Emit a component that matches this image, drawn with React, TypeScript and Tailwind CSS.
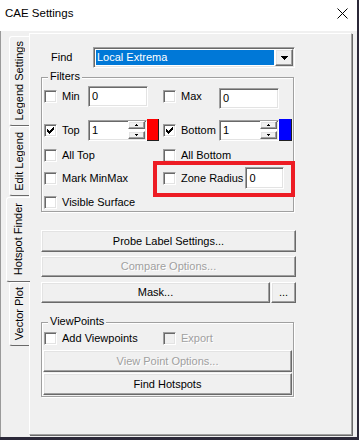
import React from 'react';

const raised =
  'border border-t-white border-l-white border-r-[#696969] border-b-[#696969] shadow-[inset_-1px_-1px_0_#a0a0a0,inset_1px_1px_0_#e3e3e3]';
const sunken =
  'border border-t-[#a0a0a0] border-l-[#a0a0a0] border-r-white border-b-white shadow-[inset_1px_1px_0_#696969,inset_-1px_-1px_0_#e3e3e3]';
const dim = 'text-[#a0a0a0] [text-shadow:1px_1px_0_#fff]';

const Check = ({ checked = false, disabled = false }: { checked?: boolean; disabled?: boolean }) => (
  <span className={`relative block w-[13px] h-[13px] shrink-0 ${sunken} ${disabled ? 'bg-[#f0f0f0]' : 'bg-white'}`}>
    {checked && (
      <svg className="absolute left-px top-px" width="9" height="9" viewBox="0 0 9 9" shapeRendering="crispEdges">
        {[[1, 3], [2, 4], [3, 5], [4, 4], [5, 3], [6, 2], [7, 1]].map(([x, y]) => (
          <rect key={x} x={x} y={y} width="1" height="3" fill="#000" />
        ))}
      </svg>
    )}
  </span>
);

const Spin = () => (
  <div className="ml-auto mr-px flex flex-col gap-[2px]">
    <div className={`w-[17px] h-[8px] bg-[#f0f0f0] flex items-center justify-center ${raised}`}>
      <svg width="3" height="2" viewBox="0 0 3 2" shapeRendering="crispEdges">
        <rect x="1" y="0" width="1" height="1" fill="#000" />
        <rect x="0" y="1" width="3" height="1" fill="#000" />
      </svg>
    </div>
    <div className={`w-[17px] h-[8px] bg-[#f0f0f0] flex items-center justify-center ${raised}`}>
      <svg width="3" height="2" viewBox="0 0 3 2" shapeRendering="crispEdges">
        <rect x="0" y="0" width="3" height="1" fill="#000" />
        <rect x="1" y="1" width="1" height="1" fill="#000" />
      </svg>
    </div>
  </div>
);

const TextBox = ({ value, className = '', spin = false }: { value: string; className?: string; spin?: boolean }) => (
  <div className={`flex items-center bg-white shrink-0 ${sunken} ${className}`}>
    <span className="pl-[3px] leading-[13px]">{value}</span>
    {spin && <Spin />}
  </div>
);

const Btn = ({
  children,
  disabled = false,
  className = '',
}: {
  children: React.ReactNode;
  disabled?: boolean;
  className?: string;
}) => (
  <div className={`flex items-center justify-center bg-[#f0f0f0] ${raised} ${disabled ? dim : 'text-black'} ${className}`}>
    {children}
  </div>
);

const Group = ({ label, className = '', children }: { label: string; className?: string; children: React.ReactNode }) => (
  <div className={`relative border border-[#a0a0a0] shadow-[inset_1px_1px_0_#fff,1px_1px_0_#fff] ${className}`}>
    <span className="absolute -top-[8px] left-[6px] bg-[#f0f0f0] px-[2px] leading-[13px]">{label}</span>
    {children}
  </div>
);

const Tab = ({ label, h, active = false }: { label: string; h: string; active?: boolean }) => (
  <div
    className={`flex items-center justify-center bg-[#f0f0f0] border-l border-t border-b border-l-white border-t-white border-b-[#696969] rounded-tl-[3px] rounded-bl-[3px] ${h} ${
      active ? 'w-[24px] -mr-px relative z-10' : 'w-[20px]'
    }`}
  >
    <span className="[writing-mode:vertical-rl] rotate-180 whitespace-nowrap leading-[13px]">{label}</span>
  </div>
);

export default function App() {
  return (
    <div className="w-[359px] h-[440px] bg-[#2b2838] font-['Liberation_Sans',Arial,sans-serif] text-[11px] text-black">
      <div className="w-[357px] h-[437px] flex flex-col bg-[#f0f0f0]">
        {/* Title bar */}
        <div className="h-[31px] shrink-0 bg-white flex items-center justify-between pl-[5px] pr-[9px] pb-[4px]">
          <span className="text-[11.5px]">CAE Settings</span>
          <svg width="11" height="11" viewBox="0 0 11 11">
            <path d="M0.5 0.5 L10.5 10.5 M10.5 0.5 L0.5 10.5" stroke="#000" strokeWidth="1" />
          </svg>
        </div>

        {/* Body */}
        <div className="flex-1 flex pt-[2px] border-l border-[#9a9a9a]">
          {/* Vertical tabs */}
          <div className="w-[28px] shrink-0 flex flex-col items-end pt-[3px]">
            <Tab label="Legend Settings" h="h-[90px]" />
            <Tab label="Edit Legend" h="h-[70px]" />
            <div className="h-px" />
            <Tab label="Hotspot Finder" h="h-[85px]" active />
            <Tab label="Vector Plot" h="h-[64px]" />
          </div>

          {/* Tab panel */}
          <div className="w-[323px] h-[402px] border border-t-white border-l-white border-r-[#a0a0a0] border-b-[#a0a0a0] shadow-[1px_1px_0_#696969] pl-[11px]">
            <div className="w-[255px] flex flex-col">
              {/* Find */}
              <div className="mt-[13px] h-[21px] flex items-center">
                <span className="w-[52px] pl-[10px]">Find</span>
                <div className={`w-[202px] h-[21px] flex bg-white p-px ${sunken}`}>
                  <div className="flex-1 m-px bg-[#0078d7] text-white flex items-center pl-[1px]">Local Extrema</div>
                  <div className={`w-[18px] bg-[#f0f0f0] flex items-center justify-center ${raised}`}>
                    <svg width="7" height="4" viewBox="0 0 7 4" shapeRendering="crispEdges">
                      <rect x="0" y="0" width="7" height="1" fill="#000" />
                      <rect x="1" y="1" width="5" height="1" fill="#000" />
                      <rect x="2" y="2" width="3" height="1" fill="#000" />
                      <rect x="3" y="3" width="1" height="1" fill="#000" />
                    </svg>
                  </div>
                </div>
              </div>

              {/* Filters */}
              <Group label="Filters" className="mt-[9px] w-[253px] pb-[2px]">
                <div className="mt-[8px] h-[21px] flex items-center pl-[2px]">
                  <div className="w-[119px] flex items-center">
                    <Check />
                    <span className="ml-[5px] w-[26px]">Min</span>
                    <TextBox value="0" className="w-[60px] h-[21px]" />
                  </div>
                  <div className="flex items-center">
                    <Check />
                    <span className="ml-[5px] w-[38px]">Max</span>
                    <TextBox value="0" className="w-[60px] h-[21px] mt-[3px]" />
                  </div>
                </div>

                <div className="mt-[12px] h-[22px] flex items-center pl-[2px]">
                  <div className="w-[119px] flex items-center">
                    <Check checked />
                    <span className="ml-[5px] w-[26px]">Top</span>
                    <TextBox value="1" spin className="w-[59px] h-[21px]" />
                    <div className="w-[12px] h-[22px] bg-[#ff0000] border-r border-b border-[#202020]" />
                  </div>
                  <div className="flex items-center">
                    <Check checked />
                    <span className="ml-[5px] w-[38px]">Bottom</span>
                    <TextBox value="1" spin className="w-[60px] h-[21px]" />
                    <div className="w-[13px] h-[22px] bg-[#0000ff] border-r border-b border-[#202020]" />
                  </div>
                </div>

                <div className="mt-[8px] h-[13px] flex items-center pl-[2px]">
                  <div className="w-[119px] flex items-center">
                    <Check />
                    <span className="ml-[5px]">All Top</span>
                  </div>
                  <div className="flex items-center">
                    <Check />
                    <span className="ml-[5px]">All Bottom</span>
                  </div>
                </div>

                <div className="mt-[5px] h-[22px] flex items-center pl-[2px]">
                  <div className="w-[119px] flex items-center">
                    <Check />
                    <span className="ml-[5px]">Mark MinMax</span>
                  </div>
                  <div className="flex items-center">
                    <Check />
                    <span className="ml-[5px]">Zone Radius</span>
                    <TextBox value="0" className="ml-[2px] w-[39px] h-[22px]" />
                  </div>
                </div>

                <div className="mt-[7px] h-[13px] flex items-center pl-[2px]">
                  <Check />
                  <span className="ml-[5px]">Visible Surface</span>
                </div>

                {/* red annotation */}
                <div className="absolute left-[111px] top-[83px] w-[142px] h-[36px] border-4 border-[#ed1c24]" />
              </Group>

              {/* Buttons */}
              <Btn className="mt-[18px] h-[22px]">Probe Label Settings...</Btn>
              <Btn disabled className="mt-[4px] h-[21px]">Compare Options...</Btn>
              <div className="mt-[5px] flex gap-[1px]">
                <Btn className="w-[229px] h-[21px]">Mask...</Btn>
                <Btn className="w-[25px] h-[21px]">...</Btn>
              </div>

              {/* ViewPoints */}
              <Group label="ViewPoints" className="mt-[19px] w-[253px] px-px pb-px">
                <div className="mt-[9px] h-[13px] flex items-center pl-[1px]">
                  <div className="w-[119px] flex items-center">
                    <Check />
                    <span className="ml-[5px]">Add Viewpoints</span>
                  </div>
                  <div className="flex items-center">
                    <Check disabled />
                    <span className={`ml-[5px] ${dim}`}>Export</span>
                  </div>
                </div>
                <Btn disabled className="mt-[5px] h-[22px]">View Point Options...</Btn>
                <Btn className="mt-[1px] h-[22px]">Find Hotspots</Btn>
              </Group>
            </div>
          </div>
        </div>
      </div>
    </div>
  );
}
